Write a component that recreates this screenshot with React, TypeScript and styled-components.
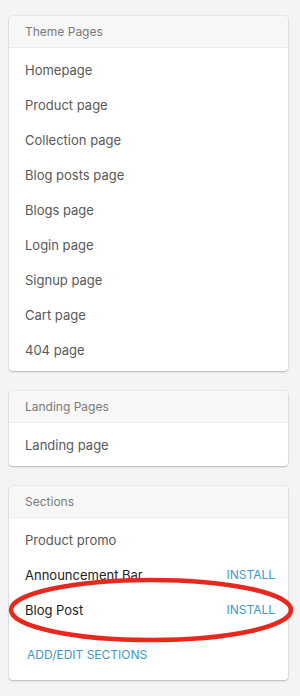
import React from "react";
import styled, { createGlobalStyle } from "styled-components";

const GlobalStyle = createGlobalStyle`
  html, body {
    margin: 0;
    padding: 0;
    background: #f4f4f4;
    font-family: Inter, "Noto Sans", sans-serif;
  }
`;

const Page = styled.div`
  display: flex;
  flex-direction: column;
  gap: 20px;
  padding: 16px 12px 16px 9px;
  width: 279px;
`;

const Card = styled.section<{ $open?: boolean }>`
  background: #ffffff;
  border-radius: 4px;
  box-shadow: 0 0 0 1px rgba(0, 0, 0, 0.04), 0 1px 2px rgba(0, 0, 0, 0.22);
  overflow: ${(p) => (p.$open ? "visible" : "hidden")};
`;

const CardHeader = styled.header`
  height: 32px;
  display: flex;
  align-items: center;
  padding: 0 16px;
  background: #f7f7f7;
  border-bottom: 1px solid #ececec;
  border-radius: 4px 4px 0 0;
  box-sizing: border-box;
  font-size: 12px;
  color: #7a7a7a;
`;

const List = styled.ul<{ $flush?: boolean }>`
  list-style: none;
  margin: 0;
  padding: ${(p) => (p.$flush ? "4px 0 0" : "4px 0")};
`;

const Row = styled.li<{ $dark?: boolean }>`
  position: relative;
  height: 35px;
  display: flex;
  align-items: center;
  justify-content: space-between;
  padding: 0 13px 0 16px;
  font-size: 13px;
  color: ${(p) => (p.$dark ? "#222222" : "#595959")};
`;

const Install = styled.span`
  font-size: 12px;
  color: #3d9ac6;
`;

const Footer = styled.div`
  padding: 19px 18px 17px;
  font-size: 12px;
  line-height: 17px;
  color: #3d9ac6;
`;

// hand-drawn annotation ring around the Blog Post row
const Circle = styled.svg`
  position: absolute;
  left: -1px;
  top: -16px;
  width: 286px;
  height: 68px;
  pointer-events: none;
  overflow: visible;
`;

const themePages = [
  "Homepage",
  "Product page",
  "Collection page",
  "Blog posts page",
  "Blogs page",
  "Login page",
  "Signup page",
  "Cart page",
  "404 page",
];

export default function App() {
  return (
    <>
      <GlobalStyle />
      <Page>
        <Card>
          <CardHeader>Theme Pages</CardHeader>
          <List>
            {themePages.map((name) => (
              <Row key={name}>{name}</Row>
            ))}
          </List>
        </Card>
        <Card>
          <CardHeader>Landing Pages</CardHeader>
          <List>
            <Row>Landing page</Row>
          </List>
        </Card>
        <Card $open>
          <CardHeader>Sections</CardHeader>
          <List $flush>
            <Row>Product promo</Row>
            <Row $dark>
              Announcement Bar
              <Install>INSTALL</Install>
            </Row>
            <Row $dark>
              Blog Post
              <Install>INSTALL</Install>
              <Circle viewBox="0 0 286 68">
                <ellipse
                  cx="143"
                  cy="34"
                  rx="140"
                  ry="30"
                  fill="none"
                  stroke="#e8281c"
                  strokeWidth="4.5"
                />
              </Circle>
            </Row>
          </List>
          <Footer>ADD/EDIT SECTIONS</Footer>
        </Card>
      </Page>
    </>
  );
}
